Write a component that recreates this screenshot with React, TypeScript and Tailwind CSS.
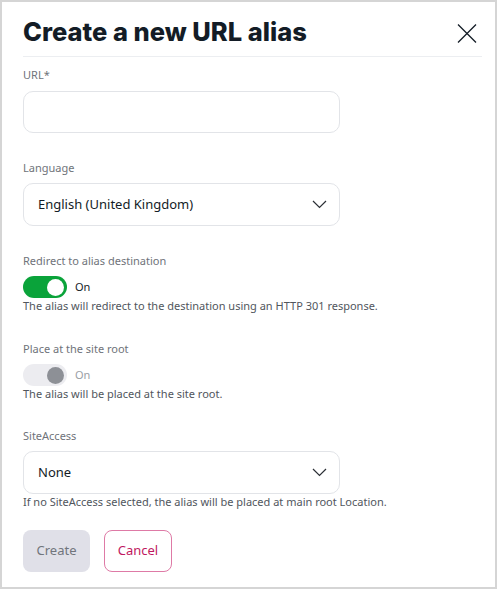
const Chevron = () => (
  <svg width="15" height="9" viewBox="0 0 15 9" fill="none">
    <path d="M1 1 L7.5 7.5 L14 1" stroke="#2b2f35" strokeWidth="1.2" />
  </svg>
)

const Field = ({ label, children }: { label: string; children: React.ReactNode }) => (
  <div className="flex flex-col">
    <div className="text-[11px] leading-[16px] text-[#6f737a]">{label}</div>
    {children}
  </div>
)

const SelectBox = ({ value }: { value: string }) => (
  <div className="mt-[7px] flex h-[43px] w-[317px] items-center justify-between rounded-[10px] border border-[#e2e4e8] bg-white pl-[14px] pr-[12px] text-[13px] text-[#131c26]">
    <span>{value}</span>
    <Chevron />
  </div>
)

const Toggle = ({ disabled }: { disabled?: boolean }) => (
  <div className="mt-[7px] flex items-center gap-[8px]">
    <div
      className={
        disabled
          ? 'flex h-[22px] w-[44px] items-center justify-end rounded-full bg-[#ececf0] px-[3px]'
          : 'flex h-[22px] w-[44px] items-center justify-end rounded-full bg-[#0aa33a] px-[3px]'
      }
    >
      <div
        className={
          disabled ? 'h-[17px] w-[17px] rounded-full bg-[#8d9096]' : 'h-[17px] w-[17px] rounded-full bg-white'
        }
      />
    </div>
    <span className={disabled ? 'text-[11px] text-[#9a9ea5]' : 'text-[11px] text-[#131c26]'}>On</span>
  </div>
)

const Help = ({ children }: { children: React.ReactNode }) => (
  <div className="text-[11px] leading-[16px] text-[#51565d]">{children}</div>
)

export default function App() {
  return (
    <div
      className="h-[589px] w-[497px] border-2 border-[#d5d5d5] bg-white pl-[21px] pr-[13px]"
      style={{ fontFamily: '"Noto Sans", sans-serif' }}
    >
      <div className="flex h-[55px] items-center justify-between border-b border-[#eceef1] pt-[6px]">
        <h1 className="text-[25.5px] font-extrabold text-[#131c26]" style={{ fontFamily: 'Inter, sans-serif' }}>
          Create a new URL alias
        </h1>
        <svg width="20" height="19" viewBox="0 0 20 19" className="mr-[5px] mt-[2px]">
          <path d="M1 0.5 L19 18.5 M19 0.5 L1 18.5" stroke="#131c26" strokeWidth="1.3" />
        </svg>
      </div>

      <div className="mt-[10px] flex flex-col">
        <Field label="URL*">
          <div className="mt-[8px] h-[42px] w-[317px] rounded-[10px] border border-[#e2e4e8] bg-white" />
        </Field>

        <div className="mt-[27px]">
          <Field label="Language">
            <SelectBox value="English (United Kingdom)" />
          </Field>
        </div>

        <div className="mt-[27px]">
          <Field label="Redirect to alias destination">
            <Toggle />
            <Help>The alias will redirect to the destination using an HTTP 301 response.</Help>
          </Field>
        </div>

        <div className="mt-[27px]">
          <Field label="Place at the site root">
            <Toggle disabled />
            <Help>The alias will be placed at the site root.</Help>
          </Field>
        </div>

        <div className="mt-[26px]">
          <Field label="SiteAccess">
            <SelectBox value="None" />
            <Help>If no SiteAccess selected, the alias will be placed at main root Location.</Help>
          </Field>
        </div>

        <div className="mt-[20px] flex gap-[14px]">
          <button className="h-[42px] w-[67px] rounded-[8px] bg-[#e0e0e8] text-[13px] text-[#71757c]">Create</button>
          <button className="h-[42px] w-[68px] rounded-[8px] border border-[#de7aa6] bg-white text-[13px] text-[#c0185f]">
            Cancel
          </button>
        </div>
      </div>
    </div>
  )
}
